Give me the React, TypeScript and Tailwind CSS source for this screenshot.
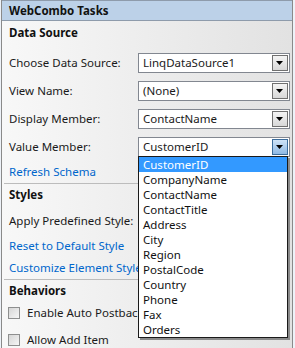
import React from "react";

const items = [
  "CustomerID",
  "CompanyName",
  "ContactName",
  "ContactTitle",
  "Address",
  "City",
  "Region",
  "PostalCode",
  "Country",
  "Phone",
  "Fax",
  "Orders",
];

const Arrow = ({ active }: { active?: boolean }) => (
  <div
    className={
      active
        ? "flex h-[16px] w-[16px] items-center justify-center border border-[#3c6d9c] bg-linear-to-b from-[#cfe3f7] to-[#8fb9e4]"
        : "flex h-[16px] w-[16px] items-center justify-center border border-[#707070] bg-linear-to-b from-[#f4f4f4] to-[#d8d8d8]"
    }
  >
    <svg width="8" height="5" viewBox="0 0 8 5">
      <path d="M0 0h7L3.5 4z" fill="#000" />
    </svg>
  </div>
);

const Combo = ({ value, active }: { value: string; active?: boolean }) => (
  <div className="flex h-[20px] w-[152px] items-center justify-between border border-[#828790] bg-white pl-[4px] pr-[1px]">
    <span className="text-[11.5px] text-[#1a1a1a]">{value}</span>
    <Arrow active={active} />
  </div>
);

const Row = ({ label, value, active }: { label: string; value: string; active?: boolean }) => (
  <div className="flex h-[28px] items-center">
    <span className="w-[136px] pl-[7px] text-[11.5px] text-[#1a1a1a]">{label}</span>
    <Combo value={value} active={active} />
  </div>
);

const Title = ({ text, h }: { text: string; h: string }) => (
  <div className={`flex items-center pl-[7px] text-[11.5px] font-bold text-[#111] ${h}`}>{text}</div>
);

const Link = ({ text, h }: { text: string; h: string }) => (
  <div className={`flex items-center pl-[7px] text-[11.5px] text-[#0066cc] whitespace-nowrap ${h}`}>{text}</div>
);

const Check = ({ text, h }: { text: string; h: string }) => (
  <div className={`flex items-center gap-[7px] pl-[6px] ${h}`}>
    <div className="h-[12px] w-[12px] border border-[#8e8f8f] bg-linear-to-br from-[#d6d6d6] to-[#f6f6f6]" />
    <span className="text-[11.5px] text-[#1a1a1a] whitespace-nowrap">{text}</span>
  </div>
);

export default function App() {
  return (
    <div
      className="h-[348px] w-[295px] overflow-hidden bg-[#eef2f8]"
      style={{ fontFamily: '"Noto Sans", "Open Sans", sans-serif' }}
    >
      <div className="relative ml-[1px] h-[348px] w-[292px] border-x border-[#8a8a8a] bg-linear-to-r from-[#f8f8f8] to-[#e2e2e2]">
        <div className="flex h-[21px] items-center border-y border-[#8e9bab] bg-[#bcd1e8] pl-[7px] text-[11.5px] font-bold text-[#111]">
          WebCombo Tasks
        </div>
        <Title text="Data Source" h="h-[28px] pb-[4px]" />
        <Row label="Choose Data Source:" value="LinqDataSource1" />
        <Row label="View Name:" value="(None)" />
        <Row label="Display Member:" value="ContactName" />
        <Row label="Value Member:" value="CustomerID" active />
        <Link text="Refresh Schema" h="h-[22px]" />
        <div className="mx-[2px] h-px bg-[#bcbcbc]" />
        <Title text="Styles" h="h-[22px]" />
        <div className="flex h-[30px] items-center pl-[7px] text-[11.5px] text-[#1a1a1a] whitespace-nowrap">
          Apply Predefined Style:
        </div>
        <Link text="Reset to Default Style" h="h-[20px]" />
        <Link text="Customize Element Style" h="h-[23px]" />
        <div className="mx-[2px] h-px bg-[#bcbcbc]" />
        <Title text="Behaviors" h="h-[22px]" />
        <Check text="Enable Auto Postback" h="h-[22px]" />
        <Check text="Allow Add Item" h="h-[32px]" />

        <div className="absolute left-[136px] top-[156px] w-[150px] border border-[#1a1a1a] bg-white shadow-[2px_2px_0_#8a8a8a]">
          {items.map((it, i) => (
            <div
              key={it}
              className={
                i === 0
                  ? "flex h-[15px] items-center bg-[#3399ff] pl-[4px] text-[11.5px] text-white"
                  : "flex h-[15px] items-center pl-[4px] text-[11.5px] text-[#111]"
              }
            >
              {it}
            </div>
          ))}
        </div>
      </div>
    </div>
  );
}
